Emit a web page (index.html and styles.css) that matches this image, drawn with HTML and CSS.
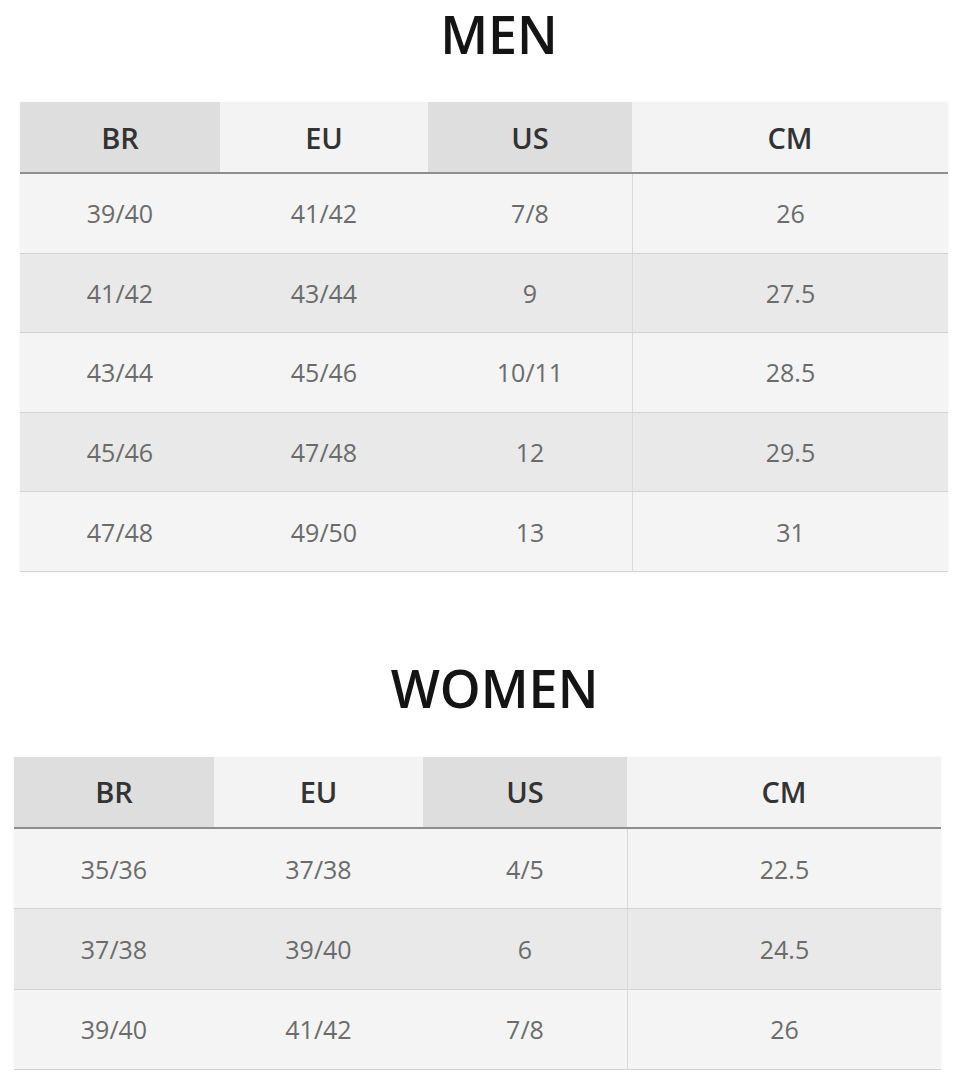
FILE: index.html
```html
<!DOCTYPE html>
<html lang="en">
<head>
<meta charset="utf-8">
<title>Size chart</title>
<link rel="stylesheet" href="styles.css">
</head>
<body>
<section class="chart chart-men">
  <h2 class="title">MEN</h2>
  <div class="table">
    <div class="row head">
      <div class="cell dark">BR</div>
      <div class="cell">EU</div>
      <div class="cell dark">US</div>
      <div class="cell last">CM</div>
    </div>
    <div class="row odd"><div class="cell">39/40</div><div class="cell">41/42</div><div class="cell">7/8</div><div class="cell last">26</div></div>
    <div class="row even"><div class="cell">41/42</div><div class="cell">43/44</div><div class="cell">9</div><div class="cell last">27.5</div></div>
    <div class="row odd"><div class="cell">43/44</div><div class="cell">45/46</div><div class="cell">10/11</div><div class="cell last">28.5</div></div>
    <div class="row even"><div class="cell">45/46</div><div class="cell">47/48</div><div class="cell">12</div><div class="cell last">29.5</div></div>
    <div class="row odd"><div class="cell">47/48</div><div class="cell">49/50</div><div class="cell">13</div><div class="cell last">31</div></div>
  </div>
</section>
<section class="chart chart-women">
  <h2 class="title">WOMEN</h2>
  <div class="table">
    <div class="row head">
      <div class="cell dark">BR</div>
      <div class="cell">EU</div>
      <div class="cell dark">US</div>
      <div class="cell last">CM</div>
    </div>
    <div class="row odd"><div class="cell">35/36</div><div class="cell">37/38</div><div class="cell">4/5</div><div class="cell last">22.5</div></div>
    <div class="row even"><div class="cell">37/38</div><div class="cell">39/40</div><div class="cell">6</div><div class="cell last">24.5</div></div>
    <div class="row odd"><div class="cell">39/40</div><div class="cell">41/42</div><div class="cell">7/8</div><div class="cell last">26</div></div>
  </div>
</section>
</body>
</html>
```

FILE: styles.css
```css
html, body {
  margin: 0;
  padding: 0;
  background: #ffffff;
}

body {
  font-family: "Open Sans", "DejaVu Sans", sans-serif;
  color: #333;
}

*, *::before, *::after {
  box-sizing: border-box;
}

.chart {
  display: flex;
  flex-direction: column;
}

.chart-men {
  padding: 8px 24px 0 20px;
}

.chart-women {
  padding: 90px 31px 0 14px;
}

.title {
  margin: 0;
  font-size: 52px;
  line-height: 52px;
  font-weight: 600;
  color: #141414;
  text-align: center;
}

.chart-men .title {
  margin-bottom: 42px;
  padding-left: 30px;
}

.chart-women .title {
  margin-bottom: 43px;
  padding-left: 34px;
}

.table {
  display: flex;
  flex-direction: column;
  box-shadow: 0 0 3px rgba(0, 0, 0, 0.06);
}

.row {
  display: grid;
  grid-template-columns: 200px 208px 204px 1fr;
  height: 79.6px;
  border-bottom: 1px solid #d2d2d2;
}

.chart-women .row {
  grid-template-columns: 200px 209px 204px 1fr;
  height: 80.3px;
}

.row.head,
.chart-women .row.head {
  height: 72px;
  border-bottom: 2px solid #8e8e8e;
  background: #f3f3f3;
}

.row.odd {
  background: #f4f4f4;
}

.row.even {
  background: #e9e9e9;
}

.cell {
  display: flex;
  align-items: center;
  justify-content: center;
  font-size: 25px;
  color: #6b6b6b;
}

.cell.last {
  border-left: 1px solid #dadada;
}

.head .cell {
  font-size: 29px;
  font-weight: 600;
  color: #333;
}

.head .cell.last {
  border-left: none;
}

.head .cell.dark {
  background: #dedede;
}
```
